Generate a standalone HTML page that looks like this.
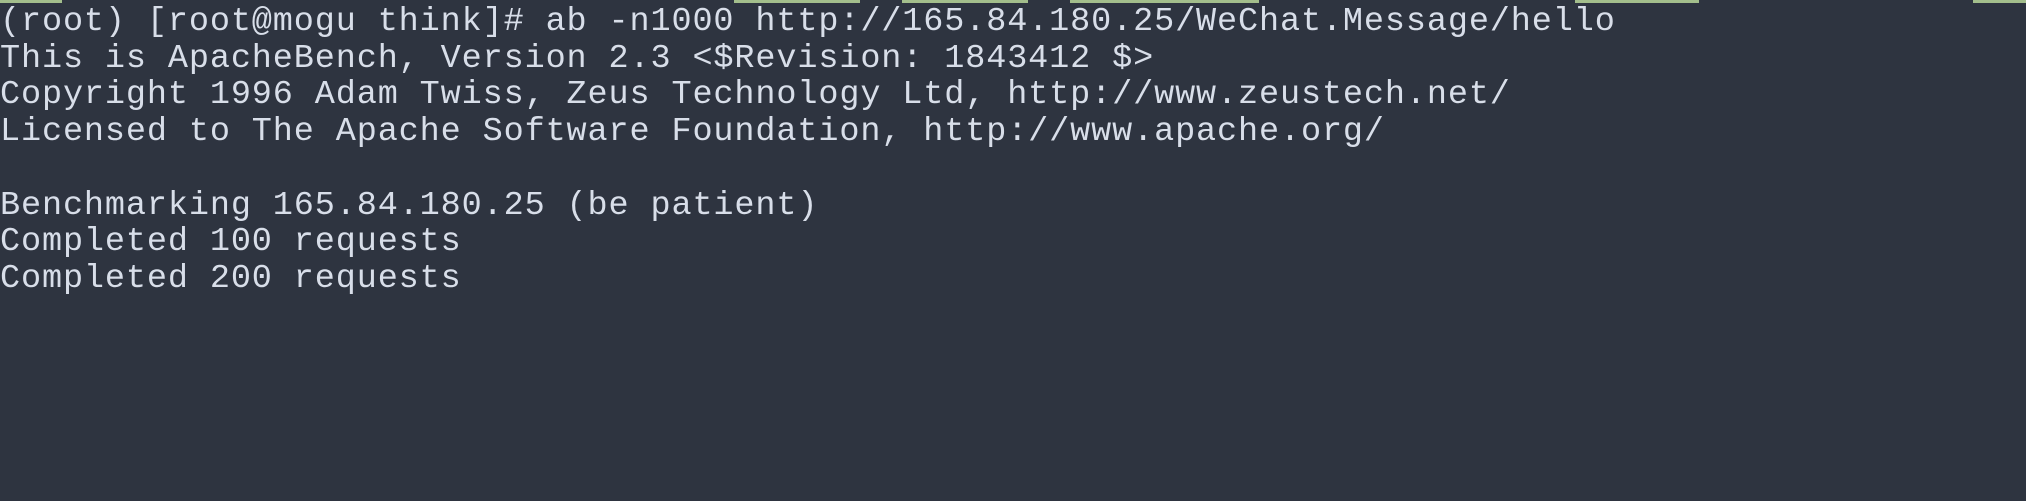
<!DOCTYPE html>
<html><head><meta charset="utf-8"><style>
html,body{margin:0;padding:0;}
body{width:2026px;height:501px;background:#2e3440;overflow:hidden;position:relative;}
.g{position:absolute;top:0;height:3px;background:#a3be8c;}
pre{margin:0;position:absolute;left:0;top:4px;font-family:"Liberation Mono",monospace;font-size:33.5px;letter-spacing:0.88px;line-height:36.7px;color:#d8dee9;white-space:pre;}
</style></head><body>
<div class="g" style="left:0;width:62px"></div>
<div class="g" style="left:734px;width:126px"></div>
<div class="g" style="left:902px;width:126px"></div>
<div class="g" style="left:1070px;width:189px"></div>
<div class="g" style="left:1575px;width:124px"></div>
<div class="g" style="left:1973px;width:53px"></div>
<pre>(root) [root@mogu think]# ab -n1000 http://165.84.180.25/WeChat.Message/hello
This is ApacheBench, Version 2.3 &lt;$Revision: 1843412 $&gt;
Copyright 1996 Adam Twiss, Zeus Technology Ltd, http://www.zeustech.net/
Licensed to The Apache Software Foundation, http://www.apache.org/

Benchmarking 165.84.180.25 (be patient)
Completed 100 requests
Completed 200 requests</pre>
</body></html>
